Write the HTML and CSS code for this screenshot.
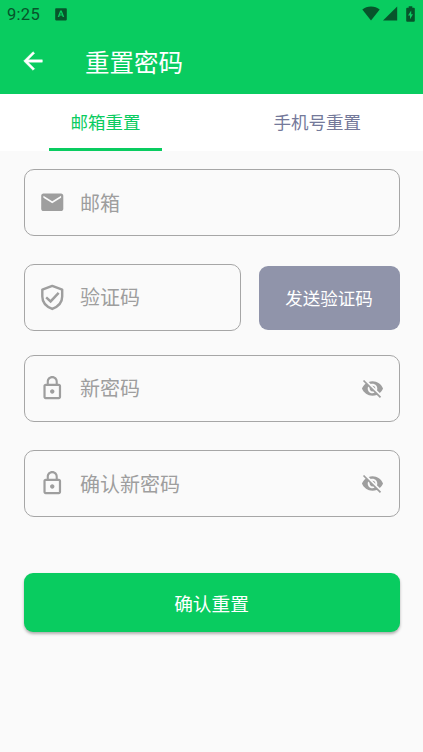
FILE: index.html
```html
<!DOCTYPE html>
<html lang="zh-CN">
<head>
<meta charset="utf-8">
<title>重置密码</title>
<link rel="stylesheet" href="styles.css">
</head>
<body>
<header class="header">
  <div class="status">
    <span class="time">9:25</span>
    <svg class="badge" viewBox="0 0 12 13"><path fill="#07542b" fill-rule="evenodd" d="M1 .3h10q.8 0 .8.8v10.5q0 .8-.8.8H1q-.8 0-.8-.8V1.100Q.2.300 1 .3zM5.200 2.600 2.700 9h1.500l.5-1.400h2.500L7.700 9h1.500L6.700 2.600zM5.950 4.300l.8 2.200h-1.600z"/></svg>
    <svg class="wifi" viewBox="0 0 18 15"><path fill="#07542b" d="M9 14.500.3 3.600C2.700 1.600 5.700.5 9 .5s6.300 1.100 8.700 3.100z"/></svg>
    <svg class="signal" viewBox="0 0 15 15"><path fill="#07542b" d="M14.200.4v14.200H0z"/></svg>
    <svg class="battery" viewBox="0 0 9 16"><path fill="#07542b" fill-rule="evenodd" d="M2.700.2h3.600v1.500h1.500q1 0 1 1v12q0 1-1 1H1.200q-1 0-1-1v-12q0-1 1-1h1.500zM5.200 4.500 2 9.500h2v3.700l3-5H5.200z"/></svg>
  </div>
  <div class="bar">
    <svg class="back" viewBox="0 0 24 24"><path fill="#fff" stroke="#fff" stroke-width=".4" d="M20 11H7.830l5.590-5.590L12 4l-8 8 8 8 1.410-1.410L7.830 13H20v-2z"/></svg>
    <h1 class="title">重置密码</h1>
  </div>
</header>
<nav class="tabs">
  <div class="tab active"><span>邮箱重置</span></div>
  <div class="tab"><span>手机号重置</span></div>
</nav>
<main class="form">
  <div class="field email">
    <svg class="icon" viewBox="0 0 24 24"><path d="M20 4H4c-1.100 0-1.990.9-1.990 2L2 18c0 1.100.9 2 2 2h16c1.100 0 2-.9 2-2V6c0-1.100-.9-2-2-2zm0 4l-8 5-8-5V6l8 5 8-5v2z"/></svg>
    <span class="hint">邮箱</span>
  </div>
  <div class="code-row">
    <div class="field">
      <svg class="icon" viewBox="0 0 24 24"><g fill="none" stroke="#9e9e9e" stroke-width="2.200"><path d="M12 1.700 21 5v6.300c0 5-3.300 9-9 11.300-5.700-2.300-9-6.300-9-11.300V5z" stroke-linejoin="round"/><path d="m6.500 12.200 4 3.600 7.300-7.700"/></g></svg>
      <span class="hint">验证码</span>
    </div>
    <div class="send">发送验证码</div>
  </div>
  <div class="field password">
    <svg class="icon" viewBox="0 0 24 24"><path d="M12 17c1.100 0 2-.9 2-2s-.9-2-2-2-2 .9-2 2 .9 2 2 2zm6-9h-1V6c0-2.760-2.240-5-5-5S7 3.240 7 6v2H6c-1.100 0-2 .9-2 2v10c0 1.100.9 2 2 2h12c1.100 0 2-.9 2-2V10c0-1.100-.9-2-2-2zM8.900 6c0-1.710 1.390-3.100 3.100-3.100s3.100 1.390 3.100 3.100v2H8.900V6zM18 20H6V10h12v10z"/></svg>
    <span class="hint">新密码</span>
    <svg class="eye" viewBox="0 0 24 24"><path d="M12 7c2.760 0 5 2.240 5 5 0 .65-.13 1.260-.36 1.830l2.920 2.920c1.510-1.260 2.700-2.890 3.430-4.750-1.730-4.390-6-7.500-11-7.500-1.400 0-2.740.25-3.980.7l2.160 2.160C10.740 7.130 11.350 7 12 7zM2 4.270l2.280 2.280.46.46C3.080 8.300 1.780 10.020 1 12c1.730 4.390 6 7.500 11 7.500 1.550 0 3.030-.3 4.380-.84l.42.42L19.730 22 21 20.730 3.270 3 2 4.270zM7.530 9.800l1.550 1.550c-.05.21-.08.43-.08.65 0 1.660 1.340 3 3 3 .22 0 .44-.03.65-.08l1.550 1.550c-.67.33-1.410.53-2.200.53-2.760 0-5-2.240-5-5 0-.79.2-1.530.53-2.200zm4.310-.78l3.150 3.150.02-.16c0-1.660-1.340-3-3-3l-.17.01z"/></svg>
  </div>
  <div class="field confirm">
    <svg class="icon" viewBox="0 0 24 24"><path d="M12 17c1.100 0 2-.9 2-2s-.9-2-2-2-2 .9-2 2 .9 2 2 2zm6-9h-1V6c0-2.760-2.240-5-5-5S7 3.240 7 6v2H6c-1.100 0-2 .9-2 2v10c0 1.100.9 2 2 2h12c1.100 0 2-.9 2-2V10c0-1.100-.9-2-2-2zM8.900 6c0-1.710 1.390-3.100 3.100-3.100s3.100 1.390 3.100 3.100v2H8.900V6zM18 20H6V10h12v10z"/></svg>
    <span class="hint">确认新密码</span>
    <svg class="eye" viewBox="0 0 24 24"><path d="M12 7c2.760 0 5 2.240 5 5 0 .65-.13 1.260-.36 1.830l2.920 2.920c1.510-1.260 2.700-2.890 3.430-4.750-1.730-4.390-6-7.500-11-7.500-1.400 0-2.740.25-3.980.7l2.160 2.160C10.740 7.130 11.350 7 12 7zM2 4.270l2.280 2.280.46.46C3.080 8.300 1.780 10.020 1 12c1.730 4.390 6 7.500 11 7.500 1.550 0 3.030-.3 4.380-.84l.42.42L19.730 22 21 20.730 3.270 3 2 4.270zM7.530 9.800l1.550 1.550c-.05.21-.08.43-.08.65 0 1.660 1.340 3 3 3 .22 0 .44-.03.65-.08l1.550 1.550c-.67.33-1.410.53-2.200.53-2.760 0-5-2.240-5-5 0-.79.2-1.530.53-2.200zm4.310-.78l3.150 3.150.02-.16c0-1.660-1.340-3-3-3l-.17.01z"/></svg>
  </div>
  <div class="submit">确认重置</div>
</main>
</body>
</html>
```
FILE: styles.css
```css
* { box-sizing: border-box; }
body {
  margin: 0;
  height: 752px;
  overflow: hidden;
  background: #fafafa;
  font-family: Roboto, "Noto Sans CJK SC", sans-serif;
}
svg { display: block; flex: none; }
.header { height: 94px; background: #09cc60; }
.status { height: 28px; display: flex; align-items: center; padding: 0 8px 0 7px; }
.time { width: 48px; font-size: 16.5px; letter-spacing: .3px; line-height: 28px; padding-top: 2px; color: #07542b; }
.badge { width: 12px; height: 13px; }
.wifi { width: 18px; height: 15px; margin: -1px 3px 0 auto; }
.signal { width: 15px; height: 15px; margin: -1px 8px 0 0; }
.battery { width: 9px; height: 16px; margin-top: -1px; }
.bar { height: 66px; display: flex; align-items: center; padding: 0 19px; }
.back { width: 28px; height: 28px; }
.title { margin: 0 0 0 38px; padding-top: 5px; font-size: 24.500px; font-weight: 400; line-height: 36px; color: #fff; }
.tabs { height: 57px; display: flex; background: #fff; }
.tab { flex: 1; font-size: 17.500px; line-height: 58px; text-align: center; color: #74799a; }
.tab.active { height: 57px; margin: 0 49.500px 0 49px; flex: 0 0 113px; border-bottom: 3px solid #09cc60; color: #09cc60; }
.form { padding: 18px 23.500px 0; }
.field { height: 67px; display: flex; align-items: center; padding: 0 15px 0 14px; border: 1px solid #a6a6a6; border-radius: 10px; }
.icon { width: 26.500px; height: 26.500px; fill: #9e9e9e; }
.hint { margin-left: 15px; padding-top: 2px; font-size: 20px; line-height: 30px; color: #9e9e9e; }
.code-row { display: flex; align-items: center; gap: 18px; margin: 28px 0 24px; }
.code-row .field { width: 217px; }
.code-row .hint, .password .hint { padding-top: 0; }
.send { flex: 1; height: 64px; border-radius: 9px; background: #9094aa; color: #fff; text-align: center; font-size: 17.500px; line-height: 66px; }
.confirm { margin-top: 28px; }
.eye { width: 23px; height: 23px; margin-left: auto; fill: #9e9e9e; }
.submit { height: 59px; margin-top: 56px; border-radius: 9px; background: #09cc60; box-shadow: 0 2px 3px rgba(0,0,0,.3); color: #fff; text-align: center; font-size: 18.700px; line-height: 64px; }
```
